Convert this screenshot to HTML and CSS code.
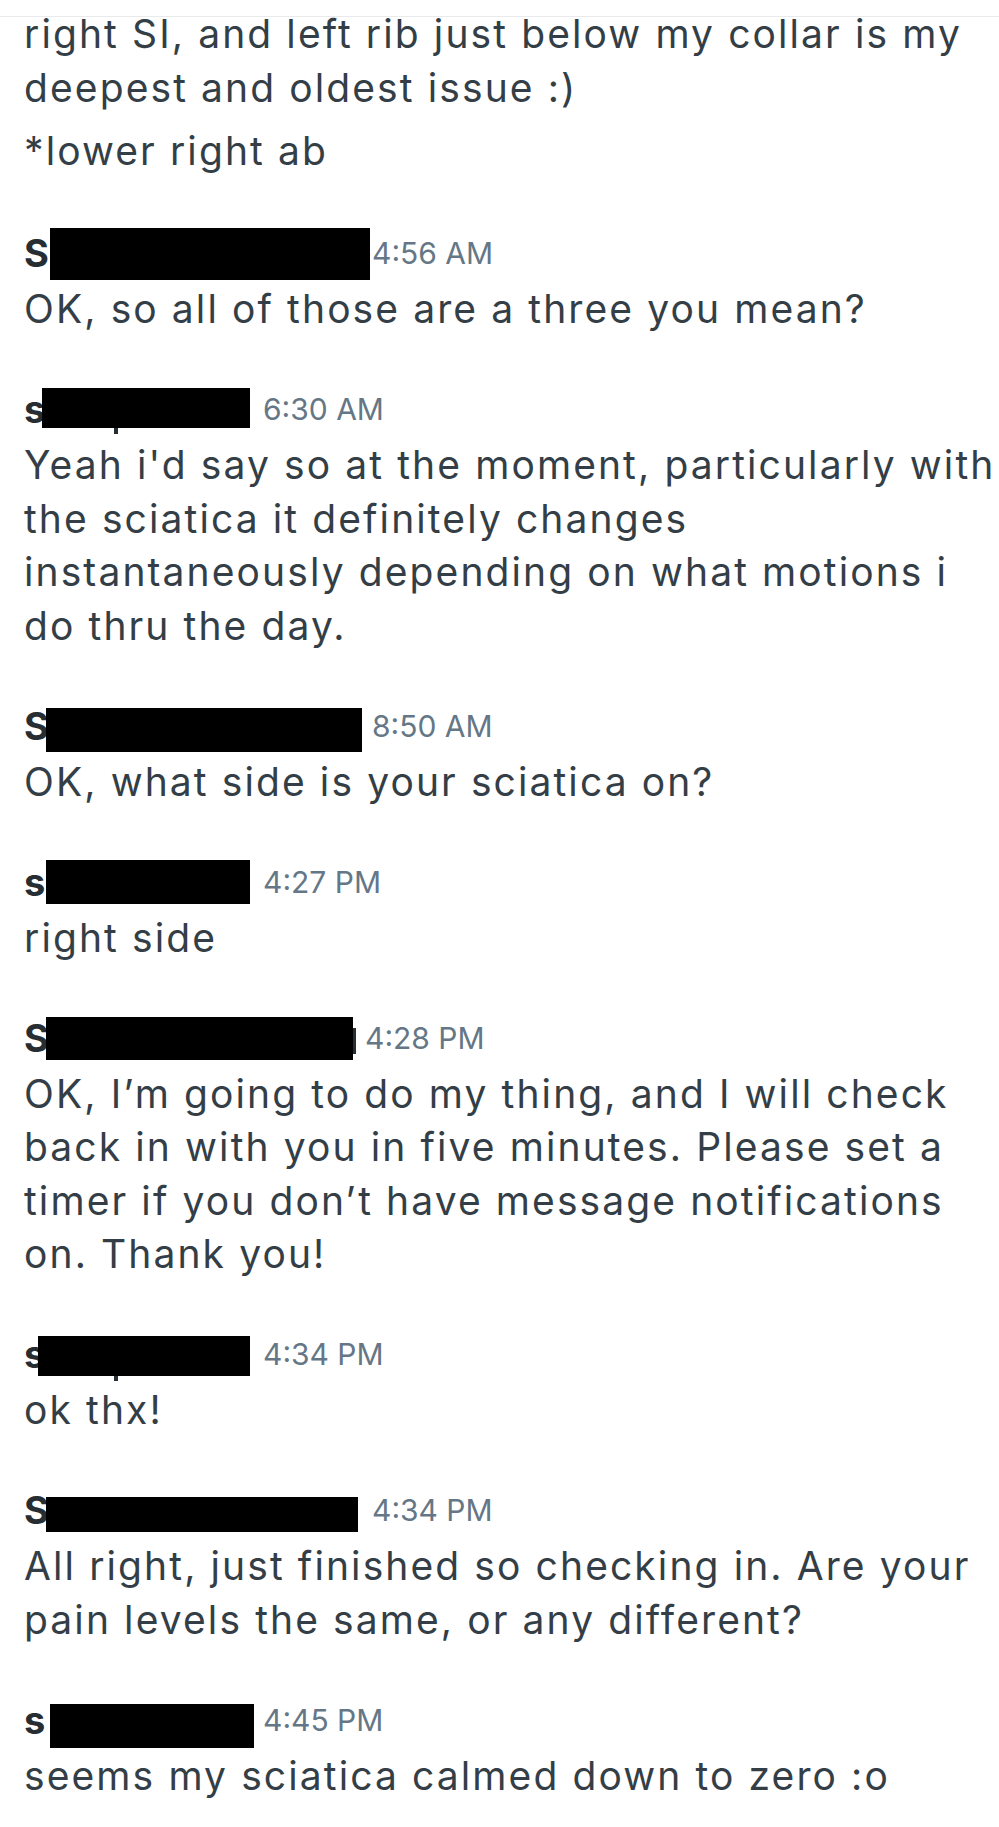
FILE: index.html
```html
<!DOCTYPE html>
<html lang="en">
<head>
<meta charset="utf-8">
<title>Messages</title>
<link rel="stylesheet" href="styles.css">
</head>
<body>
<div class="topbar"></div>
<main class="thread">
  <div class="group first">
    <p class="msg">right SI, and left rib just below my collar is my<br>deepest and oldest issue :)</p>
    <p class="msg second">*lower right ab</p>
  </div>

  <div class="group">
    <div class="hdr">
      <div class="nm w372"><span class="init">S</span><span class="redact r1"></span></div>
      <span class="time">4:56 AM</span>
    </div>
    <p class="msg">OK, so all of those are a three you mean?</p>
  </div>

  <div class="group">
    <div class="hdr">
      <div class="nm w263"><span class="init">s</span><span class="redact r2"></span><span class="stub s2"></span></div>
      <span class="time">6:30 AM</span>
    </div>
    <p class="msg">Yeah i'd say so at the moment, particularly with<br>the sciatica it definitely changes<br>instantaneously depending on what motions i<br>do thru the day.</p>
  </div>

  <div class="group">
    <div class="hdr">
      <div class="nm w372"><span class="init">S</span><span class="redact r3"></span></div>
      <span class="time">8:50 AM</span>
    </div>
    <p class="msg">OK, what side is your sciatica on?</p>
  </div>

  <div class="group">
    <div class="hdr">
      <div class="nm w263"><span class="init">s</span><span class="redact r4"></span></div>
      <span class="time">4:27 PM</span>
    </div>
    <p class="msg">right side</p>
  </div>

  <div class="group">
    <div class="hdr">
      <div class="nm w365"><span class="init">S</span><span class="redact r5"></span><span class="stub s5"></span></div>
      <span class="time">4:28 PM</span>
    </div>
    <p class="msg">OK, I’m going to do my thing, and I will check<br>back in with you in five minutes. Please set a<br>timer if you don’t have message notifications<br>on. Thank you!</p>
  </div>

  <div class="group">
    <div class="hdr">
      <div class="nm w263"><span class="init">s</span><span class="redact r6"></span><span class="stub s6"></span></div>
      <span class="time">4:34 PM</span>
    </div>
    <p class="msg">ok thx!</p>
  </div>

  <div class="group">
    <div class="hdr">
      <div class="nm w372"><span class="init">S</span><span class="redact r7"></span></div>
      <span class="time">4:34 PM</span>
    </div>
    <p class="msg">All right, just finished so checking in. Are your<br>pain levels the same, or any different?</p>
  </div>

  <div class="group">
    <div class="hdr">
      <div class="nm w263"><span class="init">s</span><span class="redact r8"></span></div>
      <span class="time">4:45 PM</span>
    </div>
    <p class="msg">seems my sciatica calmed down to zero :o</p>
  </div>
</main>
</body>
</html>
```

FILE: styles.css
```css
html, body {
  margin: 0;
  padding: 0;
  background: #ffffff;
}

body {
  width: 999px;
  height: 1827px;
  overflow: hidden;
  position: relative;
  font-family: "Inter", "Liberation Sans", sans-serif;
  color: #343e46;
}

.topbar {
  position: absolute;
  top: 0;
  left: 0;
  right: 0;
  height: 16px;
  background: #ffffff;
  border-bottom: 1px solid #e8eaeb;
  z-index: 2;
}

.thread {
  padding: 7px 0 0 24px;
  display: flex;
  flex-direction: column;
}

.group {
  margin-top: 47.5px;
}

.group.first {
  margin-top: 0;
}

.group:nth-child(2) {
  margin-top: 49.5px;
}

.msg {
  margin: 0;
  font-size: 39px;
  line-height: 53.5px;
  letter-spacing: 2.1px;
  white-space: nowrap;
  color: #343e46;
}

.msg.second {
  margin-top: 10px;
}

.hdr {
  display: flex;
  align-items: flex-start;
  height: 55px;
}

.nm {
  position: relative;
  height: 53px;
  flex: none;
}

.w372 { width: 348px; }
.w365 { width: 341px; }
.w263 { width: 239px; }

.init {
  font-size: 38px;
  line-height: 53px;
  font-weight: 700;
  color: #262d33;
}

.time {
  font-size: 30px;
  line-height: 53px;
  color: #657786;
  white-space: nowrap;
}

.redact {
  position: absolute;
  background: #000000;
}

.r1 { left: 26px; top: 1px;   width: 320px; height: 52px; }
.r2 { left: 18px; top: 5px;   width: 208px; height: 40px; }
.r3 { left: 22px; top: 8.5px; width: 316px; height: 44px; }
.r4 { left: 22px; top: 4.5px; width: 204px; height: 44px; }
.r5 { left: 22px; top: 5.5px; width: 307px; height: 43px; }
.r6 { left: 14px; top: 8px;   width: 212px; height: 40px; }
.r7 { left: 22px; top: 13px;  width: 312px; height: 35px; }
.r8 { left: 26px; top: 10.5px; width: 204px; height: 44px; }

.stub {
  position: absolute;
  background: #262d33;
}

.s2 { left: 90px; top: 45px; width: 4px; height: 6px; }
.s6 { left: 90px; top: 48px; width: 4px; height: 5px; }
.s5 { left: 329px; top: 16px; width: 3px; height: 26px; }
```
